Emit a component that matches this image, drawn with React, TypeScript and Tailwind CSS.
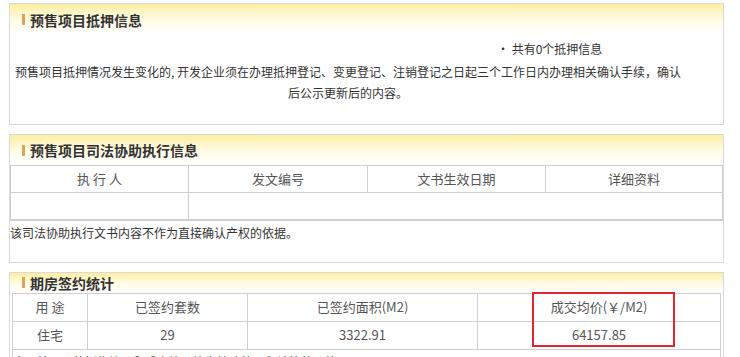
import React from "react";

const font = { fontFamily: '"Noto Sans CJK SC", "Noto Sans", sans-serif' };

function Header({ title, h }: { title: string; h: string }) {
  return (
    <div className={`${h} flex items-center pl-[12px] bg-gradient-to-b from-[#fdeea0] via-[#fffbe3] to-white`}>
      <span className="w-[3px] h-[11px] bg-[#d8a463] mr-[5px]" />
      <span className="text-[14px] font-bold text-[#333] leading-none">{title}</span>
    </div>
  );
}

export default function App() {
  return (
    <div className="w-[740px] h-[357px] overflow-hidden bg-white pt-[3px] text-[#333]" style={font}>
      {/* Panel 1 */}
      <div className="ml-[9px] w-[715px] border border-[#d9d9d9]">
        <Header title="预售项目抵押信息" h="h-[31px]" />
        <div className="mt-[6px] ml-[487px] text-[12px] leading-[16px] text-[#333] whitespace-nowrap">
          · 共有0个抵押信息
        </div>
        <div className="mt-[4px] w-[676px] text-center text-[12px] leading-[21px] whitespace-nowrap pb-[21px]">
          预售项目抵押情况发生变化的, 开发企业须在办理抵押登记、变更登记、注销登记之日起三个工作日内办理相关确认手续，确认
          <br />
          后公示更新后的内容。
        </div>
      </div>

      {/* Panel 2 */}
      <div className="ml-[9px] mt-[9px] w-[715px] border border-[#d9d9d9]">
        <Header title="预售项目司法协助执行信息" h="h-[30px]" />
        <table className="w-full border-collapse text-[13px] text-[#555]">
          <tbody>
            <tr className="h-[27px]">
              <td className="border border-[#cfcfcf] text-center w-[178px]">执 行 人</td>
              <td className="border border-[#cfcfcf] text-center w-[179px]">发文编号</td>
              <td className="border border-[#cfcfcf] text-center w-[178px]">文书生效日期</td>
              <td className="border border-[#cfcfcf] text-center">详细资料</td>
            </tr>
            <tr className="h-[27px]">
              <td className="border border-[#cfcfcf] border-b-2"></td>
              <td className="border border-[#cfcfcf] border-b-2" colSpan={3}></td>
            </tr>
          </tbody>
        </table>
        <div className="h-[41px] pt-[3px] text-[12px] leading-[18px] text-[#333] whitespace-nowrap">
          该司法协助执行文书内容不作为直接确认产权的依据。
        </div>
      </div>

      {/* Panel 3 */}
      <div className="relative ml-[9px] mt-[9px] w-[715px] border border-[#d9d9d9]">
        <Header title="期房签约统计" h="h-[20px]" />
        <div className="mx-[2px]">
          <table className="w-full border-collapse text-[13px] text-[#555]">
            <tbody>
              <tr className="h-[28px]">
                <td className="border border-[#cfcfcf] text-center w-[75px]">用 途</td>
                <td className="border border-[#cfcfcf] text-center w-[160px]">已签约套数</td>
                <td className="border border-[#cfcfcf] text-center w-[230px]">已签约面积(M2)</td>
                <td className="border border-[#cfcfcf] text-center">成交均价(￥/M2)</td>
              </tr>
              <tr className="h-[28px]">
                <td className="border border-[#cfcfcf] text-center">住宅</td>
                <td className="border border-[#cfcfcf] text-center">29</td>
                <td className="border border-[#cfcfcf] text-center">3322.91</td>
                <td className="border border-[#cfcfcf] text-center">64157.85</td>
              </tr>
              <tr className="h-[28px]">
                <td colSpan={4} className="border border-[#cfcfcf] text-left text-[12px] text-[#333] align-top pt-[3px] whitespace-nowrap">
                  本网站公示的拟售均价和成交均价均为按建筑面积计算的价格
                </td>
              </tr>
            </tbody>
          </table>
        </div>
        <div className="absolute left-[522px] top-[19px] w-[143px] h-[55px] border-2 border-[#e3262d]" />
      </div>
    </div>
  );
}
